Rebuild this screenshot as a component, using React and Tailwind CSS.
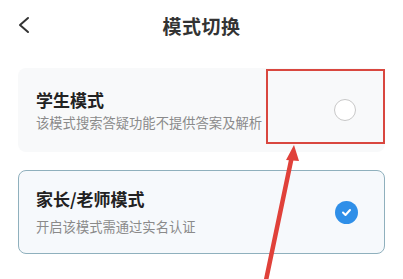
import React from "react";

export default function App() {
  return (
    <div
      className="relative w-[403px] h-[279px] overflow-hidden bg-white"
      style={{ fontFamily: '"Noto Sans CJK SC", "Noto Sans", sans-serif' }}
    >
      {/* header */}
      <div className="relative flex items-center justify-center h-[52px]">
        <svg className="absolute left-[17px] top-[16px]" width="14" height="18" viewBox="0 0 14 18">
          <path d="M11 2 L3 9 L11 16" fill="none" stroke="#333" strokeWidth="2" strokeLinecap="round" strokeLinejoin="round" />
        </svg>
        <div className="text-[19px] font-bold text-[#333] tracking-[0.5px]">模式切换</div>
      </div>

      <div className="flex flex-col gap-[18px] px-[18px] pt-[16px]">
        {/* student card */}
        <div className="flex items-center justify-between h-[84px] rounded-[8px] bg-[#f8f9fa] pl-[18px] pr-[29px]">
          <div className="flex flex-col">
            <div className="text-[17px] font-bold text-[#222] leading-[22px]">学生模式</div>
            <div className="text-[13.3px] text-[#8a8a8a] leading-[18px] mt-[3px]">该模式搜索答疑功能不提供答案及解析</div>
          </div>
          <div className="w-[22px] h-[22px] rounded-full border-[1.5px] border-[#c8c8c8] bg-white" />
        </div>

        {/* parent card */}
        <div className="flex items-center justify-between h-[84px] rounded-[8px] bg-[#f6f9fc] border border-[#8fb0bd] pl-[17px] pr-[26px]">
          <div className="flex flex-col">
            <div className="text-[17px] font-bold text-[#222] leading-[22px]">家长/老师模式</div>
            <div className="text-[13.3px] text-[#8a8a8a] leading-[18px] mt-[8px]">开启该模式需通过实名认证</div>
          </div>
          <div className="flex items-center justify-center w-[23px] h-[23px] rounded-full bg-[#2f8fe8]">
            <svg width="11" height="9" viewBox="0 0 11 9">
              <path d="M2 4.5 L4.5 7 L9 2" fill="none" stroke="white" strokeWidth="2" strokeLinecap="round" strokeLinejoin="round" />
            </svg>
          </div>
        </div>
      </div>

      {/* annotation overlay */}
      <div className="absolute left-[266px] top-[69px] w-[119px] h-[75px] border-2 border-[#d9473f]" />
      <svg className="absolute left-0 top-0" width="403" height="279" viewBox="0 0 403 279">
        <line x1="265" y1="285" x2="292" y2="156" stroke="#e0413a" strokeWidth="4.5" strokeLinecap="round" />
        <polygon points="294,145 286,160 299,161" fill="#e0413a" />
      </svg>
    </div>
  );
}
